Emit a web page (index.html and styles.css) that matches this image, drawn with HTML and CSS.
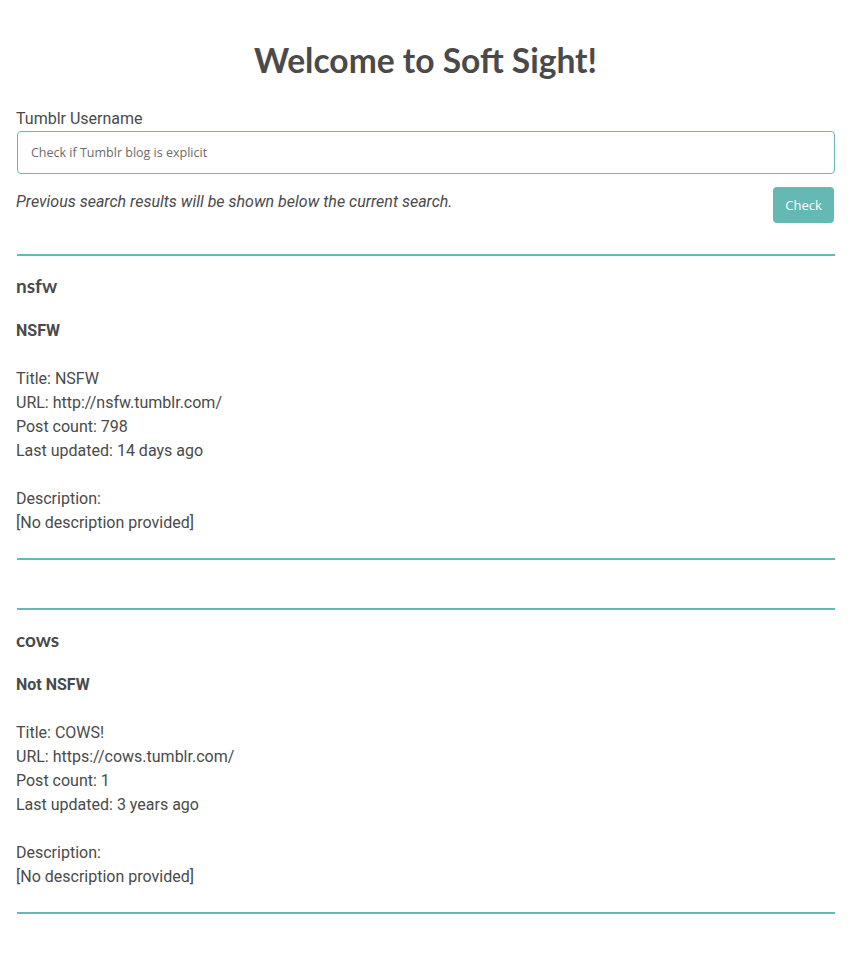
FILE: index.html
```html
<!DOCTYPE html>
<html>
<head>
<meta charset="utf-8">
<link rel="stylesheet" href="styles.css">
</head>
<body>
<main class="page">
  <h1 class="title">Welcome to Soft Sight!</h1>
  <form class="search">
    <label class="label" for="username">Tumblr Username</label>
    <input class="input" id="username" type="text" placeholder="Check if Tumblr blog is explicit">
    <div class="row">
      <p class="hint">Previous search results will be shown below the current search.</p>
      <button class="btn" type="button">Check</button>
    </div>
  </form>

  <section class="result">
    <h3 class="name">nsfw</h3>
    <p class="verdict">NSFW</p>
    <p class="info">Title: NSFW<br>URL: http://nsfw.tumblr.com/<br>Post count: 798<br>Last updated: 14 days ago<br><br>Description:<br>[No description provided]</p>
  </section>

  <section class="result">
    <h3 class="name">cows</h3>
    <p class="verdict">Not NSFW</p>
    <p class="info">Title: COWS!<br>URL: https://cows.tumblr.com/<br>Post count: 1<br>Last updated: 3 years ago<br><br>Description:<br>[No description provided]</p>
  </section>
</main>
</body>
</html>
```

FILE: styles.css
```css
* { box-sizing: border-box; }
html, body { margin: 0; padding: 0; background: #ffffff; }
body {
  font-family: Roboto, "Liberation Sans", sans-serif;
  font-size: 16px;
  line-height: 24px;
  color: #4a4a4a;
}
.page {
  width: 819px;
  margin-left: 16px;
  padding-top: 40px;
}
.title {
  margin: 0;
  font-family: Lato, "Open Sans", sans-serif;
  font-weight: 700;
  font-size: 33.6px;
  line-height: 40px;
  text-align: center;
  color: #4a4a4a;
}
.search {
  margin-top: 27px;
  display: flex;
  flex-direction: column;
}
.label {
  display: block;
  line-height: 24px;
  margin-bottom: 0;
}
.input {
  display: block;
  width: 818px;
  height: 43px;
  margin: 0 0 0 1px;
  padding: 0 13px;
  border: 1px solid #64b9b4;
  border-radius: 4px;
  font-family: "Open Sans", sans-serif;
  font-size: 12.5px;
  color: #555;
  outline: none;
}
.input::placeholder { color: #6b6b6b; }
.row {
  display: flex;
  justify-content: space-between;
  align-items: flex-start;
  margin-top: 13px;
}
.hint {
  margin: 3px 0 0 0;
  font-style: italic;
  line-height: 24px;
}
.btn {
  width: 61px;
  height: 36px;
  margin: 0 1px 0 0;
  border: none;
  border-radius: 4px;
  background: #64b9b4;
  color: #ffffff;
  font-family: "Open Sans", sans-serif;
  font-size: 13px;
  padding: 0;
  cursor: pointer;
}
.result {
  margin-left: 1px;
  border-top: 2px solid #64b9b4;
  border-bottom: 2px solid #64b9b4;
  padding-top: 18px;
  padding-bottom: 23px;
  margin-top: 31px;
}
.result + .result { margin-top: 48px; }
.name {
  margin: 0 0 0 -1px;
  font-family: Lato, "Open Sans", sans-serif;
  font-weight: 700;
  font-size: 19px;
  line-height: 24px;
}
.verdict {
  margin: 21px 0 0 -1px;
  font-weight: 700;
}
.info {
  margin: 24px 0 0 -1px;
}
```
